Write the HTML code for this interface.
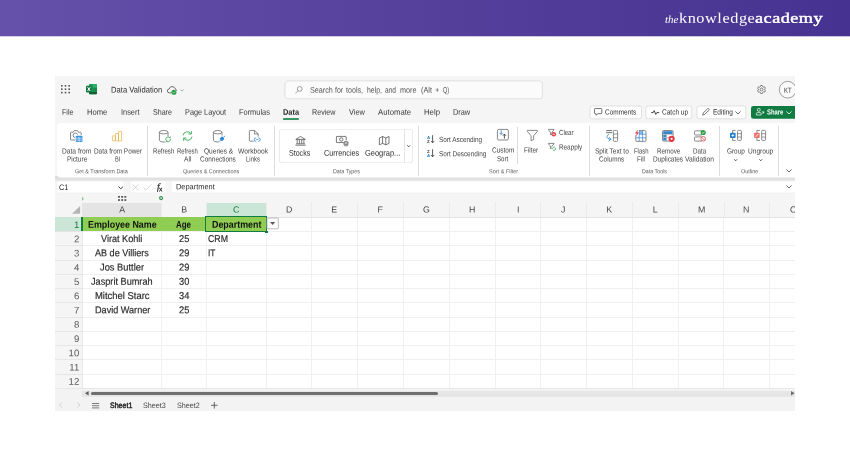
<!DOCTYPE html>
<html lang="en"><head><meta charset="utf-8"><title>Data Validation</title>
<style>
html,body{margin:0;padding:0;}
body{width:850px;height:450px;position:relative;overflow:hidden;background:#fff;font-family:"Liberation Sans", sans-serif;}
.t{position:absolute;white-space:nowrap;display:inline-block;transform-origin:0 50%;}
#hd{position:absolute;left:0;top:0;width:850px;height:40px;overflow:hidden;filter:blur(0.25px);}
#xl{position:absolute;left:55px;top:76px;width:740px;height:335px;overflow:hidden;background:#f5f5f5;filter:blur(0.3px);}
</style></head><body>
<div id="hd">
<div style="position:absolute;left:0.00px;top:0.00px;width:850.00px;height:36.30px;background:linear-gradient(90deg,#6551aa 0%,#55419c 50%,#463290 100%);"></div>
<div style="position:absolute;left:0.00px;top:36.00px;width:850.00px;height:1.00px;background:linear-gradient(90deg,#6551aa 0%,#55419c 50%,#463290 100%);opacity:0.3;"></div>
<span class="t" style='left:665.30px;top:11px;font-size:10.8px;line-height:14px;color:#fff;font-family:"Liberation Serif", serif;font-style:italic;transform:translateY(1.0px) scaleX(1.0149) rotate(0.03deg);'>the</span>
<span class="t" style='left:678.90px;top:8px;font-size:14.6px;line-height:18px;color:#fff;font-family:"Liberation Serif", serif;transform:translateY(0.75px) scaleX(1.1139) rotate(0.03deg);letter-spacing:0.5px;'>knowledge</span>
<span class="t" style='left:754.90px;top:8px;font-size:14.6px;line-height:18px;color:#fff;font-family:"Liberation Serif", serif;transform:translateY(0.75px) scaleX(1.2459) rotate(0.03deg);-webkit-text-stroke:0.45px #fff;letter-spacing:0.4px;'>academy</span>
</div>
<div id="xl">
<svg style="position:absolute;left:5.60px;top:9.20px;overflow:visible;" width="9.00" height="8.40" viewBox="0 0 9.00 8.40" fill="none"><rect x="0" y="0" width="1.6" height="1.6" fill="#555"/><rect x="0" y="3.4" width="1.6" height="1.6" fill="#555"/><rect x="0" y="6.8" width="1.6" height="1.6" fill="#555"/><rect x="3.7" y="0" width="1.6" height="1.6" fill="#555"/><rect x="3.7" y="3.4" width="1.6" height="1.6" fill="#555"/><rect x="3.7" y="6.8" width="1.6" height="1.6" fill="#555"/><rect x="7.4" y="0" width="1.6" height="1.6" fill="#555"/><rect x="7.4" y="3.4" width="1.6" height="1.6" fill="#555"/><rect x="7.4" y="6.8" width="1.6" height="1.6" fill="#555"/></svg>
<svg style="position:absolute;left:30.90px;top:8.30px;overflow:visible;" width="11.50" height="10.20" viewBox="0 0 11.50 10.20" fill="none"><rect x="3" y="0" width="8" height="10.2" rx="0.9" fill="#1f9a57"/><rect x="7" y="0.2" width="4" height="3.6" rx="0.6" fill="#2db470"/><rect x="7" y="3.8" width="4" height="4" fill="#188a4b"/><path d="M3 8 H11 V9.3 Q11 10.2 10.1 10.2 H3.9 Q3 10.2 3 9.3 Z" fill="#155c33"/><rect x="0" y="1.7" width="5.8" height="6.8" rx="0.7" fill="#127a3f"/><path d="M1.6 3.2 L4.2 7 M4.2 3.2 L1.6 7" stroke="#fff" stroke-width="1"/></svg>
<svg style="position:absolute;left:111.80px;top:9.60px;overflow:visible;" width="10.00" height="9.00" viewBox="0 0 10.00 9.00" fill="none"><path d="M4 6.9 H2.5 A2 2 0 0 1 2.3 2.9 A2.9 2.9 0 0 1 7.9 2.5 A2.1 2.1 0 0 1 9.4 4.4" stroke="#555" stroke-width="0.85" fill="none" stroke-linecap="round"/><circle cx="6.9" cy="6.2" r="2.55" fill="#2aa148"/><path d="M5.8 6.3 L6.6 7.1 L8 5.4" stroke="#e8f6ea" stroke-width="0.6" fill="none"/></svg>
<svg style="position:absolute;left:124.50px;top:13.00px;overflow:visible;" width="4.10" height="2.80" viewBox="0 0 4.10 2.80" fill="none"><path d="M0.3 0.4 L2.05 2.2 L3.8 0.4" stroke="#8a8a8a" stroke-width="0.7"/></svg>
<svg style="position:absolute;left:227.80px;top:3.00px;overflow:visible;filter:drop-shadow(0 0.5px 0.6px rgba(0,0,0,0.10));" width="261.40" height="21.70" viewBox="0 0 261.40 21.70" fill="none"><rect x="2" y="2" width="257.40" height="17.70" rx="3" fill="#fbfbfb" stroke="#dedede" stroke-width="0.7"/></svg>
<svg style="position:absolute;left:240.00px;top:9.80px;overflow:visible;" width="7.60" height="7.80" viewBox="0 0 7.60 7.80" fill="none"><circle cx="4.7" cy="2.9" r="2.4" stroke="#7a7a7a" stroke-width="0.7"/><path d="M3 4.7 L0.4 7.4" stroke="#7a7a7a" stroke-width="0.7"/></svg>
<svg style="position:absolute;left:702.00px;top:9.00px;overflow:visible;" width="9.00" height="9.00" viewBox="0 0 9.00 9.00" fill="none"><path d="M3.7 0.5 H5.3 L5.6 1.6 L6.5 2.1 L7.6 1.8 L8.4 3.2 L7.6 4 V5 L8.4 5.8 L7.6 7.2 L6.5 6.9 L5.6 7.4 L5.3 8.5 H3.7 L3.4 7.4 L2.5 6.9 L1.4 7.2 L0.6 5.8 L1.4 5 V4 L0.6 3.2 L1.4 1.8 L2.5 2.1 L3.4 1.6 Z" stroke="#555" stroke-width="0.7" stroke-linejoin="round"/><circle cx="4.5" cy="4.5" r="1.4" stroke="#555" stroke-width="0.7"/></svg>
<svg style="position:absolute;left:723.80px;top:5.30px;overflow:visible;" width="17.40" height="17.40" viewBox="0 0 17.40 17.40" fill="none"><circle cx="8.7" cy="8.7" r="8.35" fill="#fafafa" stroke="#777" stroke-width="0.7"/></svg>
<svg style="position:absolute;left:226.00px;top:40.10px;overflow:visible;" width="20.00" height="5.90" viewBox="0 0 20.00 5.90" fill="none"><rect x="2" y="2" width="16.00" height="1.90" rx="0.6" fill="#3a9562"/></svg>
<svg style="position:absolute;left:532.70px;top:27.60px;overflow:visible;" width="55.50" height="16.80" viewBox="0 0 55.50 16.80" fill="none"><rect x="2" y="2" width="51.50" height="12.80" rx="2.4" fill="#fff" stroke="#d4d4d4" stroke-width="0.7"/></svg>
<svg style="position:absolute;left:589.20px;top:27.60px;overflow:visible;" width="49.80" height="16.80" viewBox="0 0 49.80 16.80" fill="none"><rect x="2" y="2" width="45.80" height="12.80" rx="2.4" fill="#fff" stroke="#d4d4d4" stroke-width="0.7"/></svg>
<svg style="position:absolute;left:640.30px;top:27.60px;overflow:visible;" width="52.90" height="16.80" viewBox="0 0 52.90 16.80" fill="none"><rect x="2" y="2" width="48.90" height="12.80" rx="2.4" fill="#fff" stroke="#d4d4d4" stroke-width="0.7"/></svg>
<svg style="position:absolute;left:693.60px;top:27.60px;overflow:visible;" width="53.40" height="16.80" viewBox="0 0 53.40 16.80" fill="none"><rect x="2" y="2" width="49.40" height="12.80" rx="2.4" fill="#107c41"/></svg>
<svg style="position:absolute;left:539.30px;top:32.30px;overflow:visible;" width="8.30" height="7.50" viewBox="0 0 8.30 7.50" fill="none"><path d="M1.3 0.5 H7 Q7.8 0.5 7.8 1.3 V4.9 Q7.8 5.7 7 5.7 H3.8 L2 7.2 V5.7 H1.3 Q0.5 5.7 0.5 4.9 V1.3 Q0.5 0.5 1.3 0.5 Z" stroke="#444" stroke-width="0.75"/></svg>
<svg style="position:absolute;left:596.00px;top:33.50px;overflow:visible;" width="8.40" height="5.00" viewBox="0 0 8.40 5.00" fill="none"><path d="M0.2 2.6 H2.2 L3.2 0.6 L4.8 4.4 L5.8 2.6 H8.2" stroke="#333" stroke-width="0.9"/></svg>
<svg style="position:absolute;left:647.00px;top:32.00px;overflow:visible;" width="7.80" height="7.80" viewBox="0 0 7.80 7.80" fill="none"><path d="M0.7 7.1 L1.3 4.9 L5.6 0.6 Q6.2 0.2 6.8 0.8 Q7.5 1.5 7 2.1 L2.8 6.4 Z" stroke="#444" stroke-width="0.7"/></svg>
<svg style="position:absolute;left:680.00px;top:34.60px;overflow:visible;" width="6.00" height="3.40" viewBox="0 0 6.00 3.40" fill="none"><path d="M0.4 0.5 L3 3 L5.6 0.5" stroke="#444" stroke-width="0.8"/></svg>
<svg style="position:absolute;left:700.90px;top:32.20px;overflow:visible;" width="8.40" height="7.60" viewBox="0 0 8.40 7.60" fill="none"><circle cx="2.8" cy="1.9" r="1.5" stroke="#fff" stroke-width="0.7"/><path d="M0.4 7 V5.6 Q0.4 4.6 1.4 4.6 H4.2 Q5.2 4.6 5.2 5.6 V7 Z" stroke="#fff" stroke-width="0.7"/><path d="M6 3.2 L7.8 5 M7.8 3.2 V5 H6" stroke="#fff" stroke-width="0.7"/></svg>
<svg style="position:absolute;left:730.50px;top:34.60px;overflow:visible;" width="6.00" height="3.40" viewBox="0 0 6.00 3.40" fill="none"><path d="M0.4 0.5 L3 3 L5.6 0.5" stroke="#fff" stroke-width="0.8"/></svg>
<div style="position:absolute;left:0.00px;top:100.00px;width:745.00px;height:5.00px;background:linear-gradient(#e0e0e0 0%,#dfdfdf 55%,#e9e9e9 100%);"></div>
<svg style="position:absolute;left:-0.20px;top:45.20px;overflow:visible;" width="747.20" height="58.40" viewBox="0 0 747.20 58.40" fill="none"><rect x="2" y="2" width="743.20" height="54.40" rx="4" fill="#fff"/></svg>
<div style="position:absolute;left:91.90px;top:50.00px;width:0.80px;height:49.60px;background:#dcdcdc;"></div>
<div style="position:absolute;left:219.00px;top:50.00px;width:0.80px;height:49.60px;background:#dcdcdc;"></div>
<div style="position:absolute;left:363.20px;top:50.00px;width:0.80px;height:49.60px;background:#dcdcdc;"></div>
<div style="position:absolute;left:534.00px;top:50.00px;width:0.80px;height:49.60px;background:#dcdcdc;"></div>
<div style="position:absolute;left:664.20px;top:50.00px;width:0.80px;height:49.60px;background:#dcdcdc;"></div>
<div style="position:absolute;left:723.20px;top:50.00px;width:0.80px;height:49.60px;background:#dcdcdc;"></div>
<div style="position:absolute;left:462.00px;top:51.00px;width:0.80px;height:37.00px;background:#dcdcdc;"></div>
<div style="position:absolute;left:223.80px;top:52.50px;width:134.50px;height:34.20px;background:#fff;border-radius:3px;box-shadow:inset 0 0 0 0.6px #e0e0e0;"></div>
<div style="position:absolute;left:349.20px;top:52.80px;width:0.60px;height:33.60px;background:#e4e4e4;"></div>
<svg style="position:absolute;left:352.40px;top:69.00px;overflow:visible;" width="3.40" height="2.20" viewBox="0 0 3.40 2.20" fill="none"><path d="M0.3 0.3 L1.7 1.8 L3.1 0.3" stroke="#333" stroke-width="0.85"/></svg>
<svg style="position:absolute;left:678.80px;top:83.00px;overflow:visible;" width="3.40" height="2.20" viewBox="0 0 3.40 2.20" fill="none"><path d="M0.3 0.3 L1.7 1.8 L3.1 0.3" stroke="#333" stroke-width="0.85"/></svg>
<svg style="position:absolute;left:703.90px;top:83.00px;overflow:visible;" width="3.40" height="2.20" viewBox="0 0 3.40 2.20" fill="none"><path d="M0.3 0.3 L1.7 1.8 L3.1 0.3" stroke="#333" stroke-width="0.85"/></svg>
<svg style="position:absolute;left:730.60px;top:93.00px;overflow:visible;" width="6.00" height="3.40" viewBox="0 0 6.00 3.40" fill="none"><path d="M0.4 0.5 L3 3 L5.6 0.5" stroke="#444" stroke-width="0.8"/></svg>
<svg style="position:absolute;left:15.40px;top:54.00px;overflow:visible;" width="12.60" height="12.00" viewBox="0 0 12.60 12.00" fill="none"><path d="M0.5 3 Q0.5 2.2 1.3 2.2 H3.2 L4.2 0.6 H7.4 L8.4 2.2 H10.4 Q11.2 2.2 11.2 3 V5.2 M0.5 3 V9.2 Q0.5 10 1.3 10 H5.2" stroke="#6b6b6b" stroke-width="0.8"/><path d="M7.6 4.6 A2.3 2.3 0 1 0 5.3 7.6" stroke="#6b6b6b" stroke-width="0.8"/><rect x="5.1" y="5.2" width="8" height="7.3" rx="1.2" fill="#fff"/><rect x="5.7" y="5.8" width="6.8" height="6.1" rx="1" fill="#3793e0"/><path d="M5.7 8.2 H12.5 M5.7 10.1 H12.5 M9.1 7 V11.9" stroke="#fff" stroke-width="0.6"/></svg>
<svg style="position:absolute;left:57.20px;top:54.70px;overflow:visible;" width="10.00" height="10.30" viewBox="0 0 10.00 10.30" fill="none"><rect x="0.4" y="4.9" width="3" height="5" rx="0.4" stroke="#e6b352" stroke-width="0.75"/><rect x="3.4" y="2.5" width="3.1" height="7.4" rx="0.4" stroke="#e6b352" stroke-width="0.75"/><rect x="6.5" y="0.4" width="3.1" height="9.5" rx="0.4" stroke="#e6b352" stroke-width="0.75"/></svg>
<svg style="position:absolute;left:103.60px;top:53.80px;overflow:visible;" width="12.40" height="12.40" viewBox="0 0 12.40 12.40" fill="none"><path d="M0.4 2.2 V10.2 A4.3 1.8 0 0 0 9.0 10.2 V2.2" stroke="#6b6b6b" stroke-width="0.8"/><ellipse cx="4.7" cy="2.2" rx="4.3" ry="1.7" stroke="#6b6b6b" stroke-width="0.8"/><rect x="6" y="6" width="6.4" height="6.4" rx="1" fill="#fff"/><path d="M7.2 10.4 A2.3 2.3 0 0 1 10.6 7.4 M11.2 8.6 A2.3 2.3 0 0 1 7.8 11.4" stroke="#3aa85a" stroke-width="0.9"/><path d="M11.5 6.3 V8 H9.8 Z M6.9 12.2 V10.4 H8.6 Z" fill="#3aa85a"/></svg>
<svg style="position:absolute;left:127.20px;top:54.90px;overflow:visible;" width="11.00" height="10.00" viewBox="0 0 11.00 10.00" fill="none"><path d="M1 4.4 A4.4 4.2 0 0 1 9 2.6 M10 5.6 A4.4 4.2 0 0 1 2 7.4" stroke="#3aa85a" stroke-width="0.9"/><path d="M9.4 0.2 V3 H6.6 M1.6 9.8 V7 H4.4" stroke="#3aa85a" stroke-width="0.9"/></svg>
<svg style="position:absolute;left:157.60px;top:53.80px;overflow:visible;" width="12.40" height="12.20" viewBox="0 0 12.40 12.20" fill="none"><path d="M0.4 2.2 V10.2 A4.3 1.8 0 0 0 9.0 10.2 V2.2" stroke="#6b6b6b" stroke-width="0.8"/><ellipse cx="4.7" cy="2.2" rx="4.3" ry="1.7" stroke="#6b6b6b" stroke-width="0.8"/><rect x="5.6" y="5.6" width="6.6" height="6.4" rx="1" fill="#fff"/><path d="M6.2 11.6 L8 9.8 M10.2 7.6 L12 5.8" stroke="#2a86d6" stroke-width="0.9"/><rect x="7.2" y="7" width="3.6" height="3.6" rx="0.8" fill="#2a86d6" transform="rotate(45 9 8.8)"/></svg>
<svg style="position:absolute;left:193.60px;top:53.90px;overflow:visible;" width="11.40" height="12.00" viewBox="0 0 11.40 12.00" fill="none"><path d="M4.6 11.2 H1.2 Q0.4 11.2 0.4 10.4 V1.2 Q0.4 0.4 1.2 0.4 H5.6 L9.2 4 V6.6 M5.6 0.4 V4 H9.2" stroke="#6b6b6b" stroke-width="0.8"/><path d="M7.2 7.9 H6.9 A1.7 1.7 0 0 0 6.9 11.3 H7.2 M9.3 7.9 H9.6 A1.7 1.7 0 0 1 9.6 11.3 H9.3 M7.2 9.6 H9.3" stroke="#2a86d6" stroke-width="0.8"/></svg>
<svg style="position:absolute;left:239.70px;top:60.30px;overflow:visible;" width="11.10" height="9.60" viewBox="0 0 11.10 9.60" fill="none"><path d="M0.8 3.4 L5.55 0.5 L10.3 3.4 Z" stroke="#4a4a4a" stroke-width="0.75" stroke-linejoin="round"/><path d="M2.2 3.6 V7.6 M4.4 3.6 V7.6 M6.7 3.6 V7.6 M8.9 3.6 V7.6 M1.2 7.8 H9.9 M0.4 9.2 H10.7" stroke="#4a4a4a" stroke-width="0.75"/></svg>
<svg style="position:absolute;left:280.90px;top:60.30px;overflow:visible;" width="12.40" height="10.20" viewBox="0 0 12.40 10.20" fill="none"><path d="M7.6 6.6 H1 Q0.4 6.6 0.4 6 V1 Q0.4 0.4 1 0.4 H9.6 Q10.2 0.4 10.2 1 V4.2" stroke="#4a4a4a" stroke-width="0.75"/><circle cx="5.3" cy="3.5" r="1.7" stroke="#4a4a4a" stroke-width="0.75"/><ellipse cx="10" cy="6.2" rx="1.9" ry="0.9" stroke="#4a4a4a" stroke-width="0.7"/><path d="M8.1 6.2 V9 A1.9 0.9 0 0 0 11.9 9 V6.2 M8.1 7.6 A1.9 0.9 0 0 0 11.9 7.6" stroke="#4a4a4a" stroke-width="0.7"/></svg>
<svg style="position:absolute;left:323.80px;top:60.30px;overflow:visible;" width="10.40" height="9.20" viewBox="0 0 10.40 9.20" fill="none"><path d="M0.4 2 L3.6 0.5 L6.8 2 L10 0.5 V7.4 L6.8 8.8 L3.6 7.4 L0.4 8.8 Z M3.6 0.5 V7.4 M6.8 2 V8.8" stroke="#4a4a4a" stroke-width="0.75" stroke-linejoin="round"/></svg>
<svg style="position:absolute;left:372.20px;top:59.30px;overflow:visible;" width="7.20" height="8.20" viewBox="0 0 7.20 8.20" fill="none"><text x="0" y="3.7" font-family="Liberation Sans, sans-serif" font-size="4.4" font-weight="700" fill="#2a86d6">A</text><text x="0" y="8.1" font-family="Liberation Sans, sans-serif" font-size="4.4" font-weight="700" fill="#333">Z</text><path d="M5.6 0.2 V7.6 M4 6 L5.6 7.8 L7.2 6" stroke="#333" stroke-width="0.8"/></svg>
<svg style="position:absolute;left:372.20px;top:73.40px;overflow:visible;" width="7.20" height="8.20" viewBox="0 0 7.20 8.20" fill="none"><text x="0" y="3.7" font-family="Liberation Sans, sans-serif" font-size="4.4" font-weight="700" fill="#333">Z</text><text x="0" y="8.1" font-family="Liberation Sans, sans-serif" font-size="4.4" font-weight="700" fill="#2a86d6">A</text><path d="M5.6 0.2 V7.6 M4 6 L5.6 7.8 L7.2 6" stroke="#333" stroke-width="0.8"/></svg>
<svg style="position:absolute;left:441.80px;top:53.30px;overflow:visible;" width="11.80" height="11.40" viewBox="0 0 11.80 11.40" fill="none"><rect x="0.4" y="0.4" width="11" height="10.6" rx="1.4" stroke="#6b6b6b" stroke-width="0.8"/><path d="M4.2 1.2 V5.4 M2.6 3.8 L4.2 5.6 L5.8 3.8" stroke="#2a86d6" stroke-width="0.8"/><path d="M7.4 9.6 V5.2 M5.8 6.8 L7.4 5 L9 6.8" stroke="#333" stroke-width="0.8"/></svg>
<svg style="position:absolute;left:471.90px;top:53.60px;overflow:visible;" width="10.70" height="11.10" viewBox="0 0 10.70 11.10" fill="none"><path d="M0.4 0.4 H10.299999999999999 V1.55 L6.63 5.77 V9.55 L4.07 10.70 V5.77 L0.4 1.55 Z" stroke="#6b6b6b" stroke-width="0.8" stroke-linejoin="round"/></svg>
<svg style="position:absolute;left:493.40px;top:52.60px;overflow:visible;" width="8.20" height="7.80" viewBox="0 0 8.20 7.80" fill="none"><path d="M0.4 0.4 H6.0 V0.87 L3.97 3.22 V5.33 L2.43 5.80 V3.22 L0.4 0.87 Z" stroke="#555" stroke-width="0.7" stroke-linejoin="round"/><circle cx="5.8" cy="5.3" r="2.3" fill="#e5484d"/><path d="M4.6 5.3 H7" stroke="#fff" stroke-width="0.7"/></svg>
<svg style="position:absolute;left:493.40px;top:66.70px;overflow:visible;" width="8.20" height="7.70" viewBox="0 0 8.20 7.70" fill="none"><path d="M0.4 0.4 H6.0 V0.84 L3.97 3.12 V5.16 L2.43 5.60 V3.12 L0.4 0.84 Z" stroke="#555" stroke-width="0.7" stroke-linejoin="round"/><rect x="3.7" y="3.2" width="4.5" height="4.5" rx="0.8" fill="#fff"/><path d="M4.4 6.2 A1.7 1.7 0 0 1 7 4.4 M7.6 5 A1.7 1.7 0 0 1 5 7" stroke="#3aa85a" stroke-width="0.8"/></svg>
<svg style="position:absolute;left:550.80px;top:54.00px;overflow:visible;" width="12.20" height="11.80" viewBox="0 0 12.20 11.80" fill="none"><path d="M0.2 0.6 H6.2 M0.2 2.7 H6.2" stroke="#444" stroke-width="0.8"/><path d="M2.6 4.6 C0 5.4 0 9.4 4.6 9.2 M3.2 7.4 L5 9.2 L3 10.9" stroke="#2a86d6" stroke-width="0.85" stroke-linecap="round"/><rect x="7.4" y="0.4" width="4.2" height="11" rx="1" stroke="#6b6b6b" stroke-width="0.8"/><path d="M7.4 4.07 H11.600000000000001 M7.4 7.73 H11.600000000000001" stroke="#6b6b6b" stroke-width="0.7"/></svg>
<svg style="position:absolute;left:580.40px;top:54.00px;overflow:visible;" width="11.40" height="11.80" viewBox="0 0 11.40 11.80" fill="none"><rect x="0.8" y="0.6" width="10.2" height="10.8" rx="1.2" stroke="#6b6b6b" stroke-width="0.8"/><path d="M4.2 0.6 V11.4 M7.6 0.6 V11.4 M0.8 4.2 H11 M0.8 7.8 H11" stroke="#2a86d6" stroke-width="0.7"/><rect x="4.2" y="0.9" width="3.4" height="3.2" fill="#2a86d6" opacity="0.55"/><rect x="0" y="0" width="3.8" height="5.4" fill="#fff"/><path d="M2.9 -0.4 L0 3.6 H1.9 L0.7 6.6 L4.2 2.4 H2.3 Z" fill="#e5383f"/></svg>
<svg style="position:absolute;left:606.80px;top:54.20px;overflow:visible;" width="12.80" height="12.00" viewBox="0 0 12.80 12.00" fill="none"><rect x="0.5" y="0.5" width="10.6" height="10.6" rx="1.2" stroke="#6b6b6b" stroke-width="0.8"/><rect x="1.2" y="1.2" width="9.2" height="2.8" fill="#2a86d6"/><rect x="1.2" y="4.8" width="3" height="2.4" fill="#2a86d6"/><rect x="1.2" y="8" width="3" height="2.4" fill="#2a86d6"/><path d="M4.6 0.6 V11 M0.6 4.4 H11 M0.6 7.6 H11" stroke="#8a8a8a" stroke-width="0.5"/><circle cx="9.6" cy="8.8" r="3.1" fill="#e5383f"/><circle cx="9.6" cy="8.8" r="1.1" fill="#fff"/></svg>
<svg style="position:absolute;left:638.60px;top:54.00px;overflow:visible;" width="12.00" height="11.80" viewBox="0 0 12.00 11.80" fill="none"><rect x="0.5" y="0.8" width="8" height="4.2" rx="1" stroke="#6b6b6b" stroke-width="0.8"/><rect x="0.5" y="6.9" width="8" height="4.2" rx="1" stroke="#6b6b6b" stroke-width="0.8"/><circle cx="9.2" cy="2.5" r="2.6" fill="#2ea043"/><path d="M8 2.6 L8.9 3.5 L10.5 1.7" stroke="#fff" stroke-width="0.7"/><circle cx="9.2" cy="8.8" r="2.3" fill="#fff" stroke="#e5484d" stroke-width="0.8"/><path d="M7.6 7.2 L10.8 10.4" stroke="#e5484d" stroke-width="0.8"/></svg>
<svg style="position:absolute;left:674.60px;top:54.10px;overflow:visible;" width="11.80" height="10.90" viewBox="0 0 11.80 10.90" fill="none"><path d="M5.6 0.4 H2.6 V10.4 H5.6" stroke="#6b6b6b" stroke-width="0.8"/><rect x="7.5" y="0.4" width="3.9" height="10" rx="1" stroke="#6b6b6b" stroke-width="0.8"/><path d="M7.5 3.73 H11.4 M7.5 7.07 H11.4" stroke="#6b6b6b" stroke-width="0.7"/><rect x="0" y="2.8" width="5.6" height="5.2" rx="0.8" fill="#1e7fd0"/><path d="M2.8 4 V6.8 M1.4 5.4 H4.2" stroke="#fff" stroke-width="0.8"/></svg>
<svg style="position:absolute;left:699.30px;top:54.10px;overflow:visible;" width="12.00" height="10.90" viewBox="0 0 12.00 10.90" fill="none"><path d="M5.9 0.4 H2.9 V10.4 H5.9" stroke="#6b6b6b" stroke-width="0.8"/><rect x="7.7" y="0.4" width="3.9" height="10" rx="1" stroke="#6b6b6b" stroke-width="0.8"/><path d="M7.7 3.73 H11.6 M7.7 7.07 H11.6" stroke="#6b6b6b" stroke-width="0.7"/><rect x="0" y="2.8" width="5.7" height="5.2" rx="0.8" fill="#ee7670"/><path d="M1.6 6.8 L4.2 4" stroke="#fff" stroke-width="0.8"/></svg>
<svg style="position:absolute;left:-0.20px;top:103.00px;overflow:visible;" width="71.50" height="15.90" viewBox="0 0 71.50 15.90" fill="none"><rect x="2" y="2" width="67.50" height="11.90" rx="2.5" fill="#fff" stroke="#ebebeb" stroke-width="0.5"/></svg>
<svg style="position:absolute;left:72.60px;top:103.00px;overflow:visible;" width="40.30" height="15.90" viewBox="0 0 40.30 15.90" fill="none"><rect x="2" y="2" width="36.30" height="11.90" rx="2.5" fill="#fff" stroke="#ebebeb" stroke-width="0.5"/></svg>
<svg style="position:absolute;left:113.80px;top:103.00px;overflow:visible;" width="633.20" height="15.90" viewBox="0 0 633.20 15.90" fill="none"><rect x="2" y="2" width="629.20" height="11.90" rx="2.5" fill="#fff" stroke="#ebebeb" stroke-width="0.5"/></svg>
<svg style="position:absolute;left:62.60px;top:109.80px;overflow:visible;" width="5.50" height="3.20" viewBox="0 0 5.50 3.20" fill="none"><path d="M0.4 0.5 L2.75 2.8 L5.1 0.5" stroke="#333" stroke-width="0.95"/></svg>
<svg style="position:absolute;left:77.20px;top:107.80px;overflow:visible;" width="7.00" height="6.80" viewBox="0 0 7.00 6.80" fill="none"><path d="M0.4 0.4 L6.6 6.4 M6.6 0.4 L0.4 6.4" stroke="#c4c4c4" stroke-width="0.7"/></svg>
<svg style="position:absolute;left:88.20px;top:108.00px;overflow:visible;" width="8.80" height="6.40" viewBox="0 0 8.80 6.40" fill="none"><path d="M0.4 3.6 L3 6 L8.4 0.4" stroke="#c4c4c4" stroke-width="0.7"/></svg>
<svg style="position:absolute;left:730.60px;top:109.40px;overflow:visible;" width="6.00" height="3.40" viewBox="0 0 6.00 3.40" fill="none"><path d="M0.4 0.5 L3 3 L5.6 0.5" stroke="#444" stroke-width="0.8"/></svg>
<svg style="position:absolute;left:27.40px;top:120.60px;overflow:visible;" width="2.00" height="3.60" viewBox="0 0 2.00 3.60" fill="none"><path d="M0.3 0.3 Q1.7 1.8 0.3 3.3" stroke="#2e9e54" stroke-width="0.8"/></svg>
<svg style="position:absolute;left:62.90px;top:120.20px;overflow:visible;" width="8.30" height="4.90" viewBox="0 0 8.30 4.90" fill="none"><rect x="0" y="0" width="1.9" height="1.7" fill="#505050"/><rect x="0" y="3.2" width="1.9" height="1.7" fill="#505050"/><rect x="3.2" y="0" width="1.9" height="1.7" fill="#505050"/><rect x="3.2" y="3.2" width="1.9" height="1.7" fill="#505050"/><rect x="6.4" y="0" width="1.9" height="1.7" fill="#505050"/><rect x="6.4" y="3.2" width="1.9" height="1.7" fill="#505050"/></svg>
<svg style="position:absolute;left:103.80px;top:120.10px;overflow:visible;" width="4.20" height="4.20" viewBox="0 0 4.20 4.20" fill="none"><circle cx="2.1" cy="2.1" r="1.5" stroke="#2a8d4c" stroke-width="1.1"/></svg>
<div style="position:absolute;left:27.60px;top:140.90px;width:717.40px;height:171.20px;background:#fff;"></div>
<div style="position:absolute;left:0.00px;top:127.40px;width:745.00px;height:13.50px;background:#f5f5f5;"></div>
<div style="position:absolute;left:27.00px;top:127.40px;width:79.40px;height:13.50px;background:#e4e4e4;"></div>
<div style="position:absolute;left:150.60px;top:127.10px;width:60.40px;height:13.80px;background:#cbe6d6;"></div>
<div style="position:absolute;left:106.10px;top:126.40px;width:0.60px;height:14.50px;background:#ebebeb;"></div>
<div style="position:absolute;left:150.70px;top:126.40px;width:0.60px;height:14.50px;background:#ebebeb;"></div>
<div style="position:absolute;left:210.70px;top:126.40px;width:0.60px;height:14.50px;background:#ebebeb;"></div>
<div style="position:absolute;left:256.48px;top:126.40px;width:0.60px;height:14.50px;background:#ebebeb;"></div>
<div style="position:absolute;left:302.26px;top:126.40px;width:0.60px;height:14.50px;background:#ebebeb;"></div>
<div style="position:absolute;left:348.04px;top:126.40px;width:0.60px;height:14.50px;background:#ebebeb;"></div>
<div style="position:absolute;left:393.82px;top:126.40px;width:0.60px;height:14.50px;background:#ebebeb;"></div>
<div style="position:absolute;left:439.60px;top:126.40px;width:0.60px;height:14.50px;background:#ebebeb;"></div>
<div style="position:absolute;left:485.38px;top:126.40px;width:0.60px;height:14.50px;background:#ebebeb;"></div>
<div style="position:absolute;left:531.16px;top:126.40px;width:0.60px;height:14.50px;background:#ebebeb;"></div>
<div style="position:absolute;left:576.94px;top:126.40px;width:0.60px;height:14.50px;background:#ebebeb;"></div>
<div style="position:absolute;left:622.72px;top:126.40px;width:0.60px;height:14.50px;background:#ebebeb;"></div>
<div style="position:absolute;left:668.50px;top:126.40px;width:0.60px;height:14.50px;background:#ebebeb;"></div>
<div style="position:absolute;left:714.28px;top:126.40px;width:0.60px;height:14.50px;background:#ebebeb;"></div>
<div style="position:absolute;left:760.06px;top:126.40px;width:0.60px;height:14.50px;background:#ebebeb;"></div>
<div style="position:absolute;left:106.05px;top:140.90px;width:0.70px;height:171.20px;background:#f0f0f0;"></div>
<div style="position:absolute;left:150.65px;top:140.90px;width:0.70px;height:171.20px;background:#f0f0f0;"></div>
<div style="position:absolute;left:210.65px;top:140.90px;width:0.70px;height:171.20px;background:#f0f0f0;"></div>
<div style="position:absolute;left:256.43px;top:140.90px;width:0.70px;height:171.20px;background:#f0f0f0;"></div>
<div style="position:absolute;left:302.21px;top:140.90px;width:0.70px;height:171.20px;background:#f0f0f0;"></div>
<div style="position:absolute;left:347.99px;top:140.90px;width:0.70px;height:171.20px;background:#f0f0f0;"></div>
<div style="position:absolute;left:393.77px;top:140.90px;width:0.70px;height:171.20px;background:#f0f0f0;"></div>
<div style="position:absolute;left:439.55px;top:140.90px;width:0.70px;height:171.20px;background:#f0f0f0;"></div>
<div style="position:absolute;left:485.33px;top:140.90px;width:0.70px;height:171.20px;background:#f0f0f0;"></div>
<div style="position:absolute;left:531.11px;top:140.90px;width:0.70px;height:171.20px;background:#f0f0f0;"></div>
<div style="position:absolute;left:576.89px;top:140.90px;width:0.70px;height:171.20px;background:#f0f0f0;"></div>
<div style="position:absolute;left:622.67px;top:140.90px;width:0.70px;height:171.20px;background:#f0f0f0;"></div>
<div style="position:absolute;left:668.45px;top:140.90px;width:0.70px;height:171.20px;background:#f0f0f0;"></div>
<div style="position:absolute;left:714.23px;top:140.90px;width:0.70px;height:171.20px;background:#f0f0f0;"></div>
<div style="position:absolute;left:760.01px;top:140.90px;width:0.70px;height:171.20px;background:#f0f0f0;"></div>
<div style="position:absolute;left:0.00px;top:155.00px;width:745.00px;height:0.70px;background:#f0f0f0;"></div>
<div style="position:absolute;left:0.00px;top:169.25px;width:745.00px;height:0.70px;background:#f0f0f0;"></div>
<div style="position:absolute;left:0.00px;top:183.50px;width:745.00px;height:0.70px;background:#f0f0f0;"></div>
<div style="position:absolute;left:0.00px;top:197.75px;width:745.00px;height:0.70px;background:#f0f0f0;"></div>
<div style="position:absolute;left:0.00px;top:212.00px;width:745.00px;height:0.70px;background:#f0f0f0;"></div>
<div style="position:absolute;left:0.00px;top:226.25px;width:745.00px;height:0.70px;background:#f0f0f0;"></div>
<div style="position:absolute;left:0.00px;top:240.50px;width:745.00px;height:0.70px;background:#f0f0f0;"></div>
<div style="position:absolute;left:0.00px;top:254.75px;width:745.00px;height:0.70px;background:#f0f0f0;"></div>
<div style="position:absolute;left:0.00px;top:269.00px;width:745.00px;height:0.70px;background:#f0f0f0;"></div>
<div style="position:absolute;left:0.00px;top:283.25px;width:745.00px;height:0.70px;background:#f0f0f0;"></div>
<div style="position:absolute;left:0.00px;top:297.50px;width:745.00px;height:0.70px;background:#f0f0f0;"></div>
<div style="position:absolute;left:0.00px;top:311.75px;width:745.00px;height:0.70px;background:#f0f0f0;"></div>
<div style="position:absolute;left:0.00px;top:140.90px;width:27.60px;height:171.20px;background:#f5f5f5;"></div>
<div style="position:absolute;left:0.00px;top:155.05px;width:27.60px;height:0.60px;background:#e6e6e6;"></div>
<div style="position:absolute;left:0.00px;top:169.30px;width:27.60px;height:0.60px;background:#e6e6e6;"></div>
<div style="position:absolute;left:0.00px;top:183.55px;width:27.60px;height:0.60px;background:#e6e6e6;"></div>
<div style="position:absolute;left:0.00px;top:197.80px;width:27.60px;height:0.60px;background:#e6e6e6;"></div>
<div style="position:absolute;left:0.00px;top:212.05px;width:27.60px;height:0.60px;background:#e6e6e6;"></div>
<div style="position:absolute;left:0.00px;top:226.30px;width:27.60px;height:0.60px;background:#e6e6e6;"></div>
<div style="position:absolute;left:0.00px;top:240.55px;width:27.60px;height:0.60px;background:#e6e6e6;"></div>
<div style="position:absolute;left:0.00px;top:254.80px;width:27.60px;height:0.60px;background:#e6e6e6;"></div>
<div style="position:absolute;left:0.00px;top:269.05px;width:27.60px;height:0.60px;background:#e6e6e6;"></div>
<div style="position:absolute;left:0.00px;top:283.30px;width:27.60px;height:0.60px;background:#e6e6e6;"></div>
<div style="position:absolute;left:0.00px;top:297.55px;width:27.60px;height:0.60px;background:#e6e6e6;"></div>
<div style="position:absolute;left:0.00px;top:311.80px;width:27.60px;height:0.60px;background:#e6e6e6;"></div>
<div style="position:absolute;left:27.20px;top:140.90px;width:0.70px;height:171.20px;background:#e8e8e8;"></div>
<div style="position:absolute;left:0.00px;top:140.50px;width:745.00px;height:0.70px;background:#e4e4e4;"></div>
<svg style="position:absolute;left:16.80px;top:130.40px;overflow:visible;" width="8.10" height="7.80" viewBox="0 0 8.10 7.80" fill="none"><path d="M8.1 0 V7.8 H0 Z" fill="#b5b5b5"/></svg>
<div style="position:absolute;left:0.00px;top:141.10px;width:26.20px;height:14.25px;background:#cbe6d6;"></div>
<div style="position:absolute;left:26.20px;top:141.10px;width:1.80px;height:14.25px;background:#107c41;"></div>
<div style="position:absolute;left:28.00px;top:141.10px;width:123.00px;height:14.25px;background:#8fce52;"></div>
<div style="position:absolute;left:150.20px;top:140.20px;width:61.60px;height:16.05px;background:#8fce52;border:1.5px solid #107c41;box-sizing:border-box;"></div>
<div style="position:absolute;left:210.20px;top:154.75px;width:2.40px;height:2.40px;background:#107c41;"></div>
<div style="position:absolute;left:151.00px;top:139.90px;width:60.00px;height:1.40px;background:#107c41;"></div>
<svg style="position:absolute;left:210.00px;top:140.00px;overflow:visible;" width="15.30" height="14.80" viewBox="0 0 15.30 14.80" fill="none"><rect x="2" y="2" width="11.30" height="10.80" rx="0.6" fill="#fff" stroke="#ababab" stroke-width="0.8"/></svg>
<svg style="position:absolute;left:215.00px;top:146.40px;overflow:visible;" width="5.20" height="2.90" viewBox="0 0 5.20 2.90" fill="none"><path d="M0 0 H5.2 L2.6 2.9 Z" fill="#5a5a5a"/></svg>
<div style="position:absolute;left:0.00px;top:312.10px;width:745.00px;height:22.90px;background:#f3f3f3;"></div>
<div style="position:absolute;left:27.00px;top:314.60px;width:718.00px;height:6.00px;background:#e6e6e6;"></div>
<div style="position:absolute;left:0.00px;top:311.80px;width:745.00px;height:0.70px;background:#e8e8e8;"></div>
<svg style="position:absolute;left:29.60px;top:315.20px;overflow:visible;" width="3.60" height="4.60" viewBox="0 0 3.60 4.60" fill="none"><path d="M3.6 0 V4.6 L0 2.3 Z" fill="#5c5c5c"/></svg>
<svg style="position:absolute;left:736.20px;top:315.20px;overflow:visible;" width="3.60" height="4.60" viewBox="0 0 3.60 4.60" fill="none"><path d="M0 0 V4.6 L3.6 2.3 Z" fill="#6c6c6c"/></svg>
<div style="position:absolute;left:35.70px;top:315.70px;width:346.90px;height:3.20px;background:#6e6e6e;border-radius:1.6px;"></div>
<svg style="position:absolute;left:4.20px;top:326.40px;overflow:visible;" width="3.40" height="6.00" viewBox="0 0 3.40 6.00" fill="none"><path d="M3 0.4 L0.5 3 L3 5.6" stroke="#c8c8c8" stroke-width="0.8"/></svg>
<svg style="position:absolute;left:21.60px;top:326.40px;overflow:visible;" width="3.40" height="6.00" viewBox="0 0 3.40 6.00" fill="none"><path d="M0.4 0.4 L2.9 3 L0.4 5.6" stroke="#c8c8c8" stroke-width="0.8"/></svg>
<svg style="position:absolute;left:37.40px;top:326.60px;overflow:visible;" width="7.20" height="5.40" viewBox="0 0 7.20 5.40" fill="none"><path d="M0 0.5 H7.2 M0 2.7 H7.2 M0 4.9 H7.2" stroke="#444" stroke-width="0.7"/></svg>
<svg style="position:absolute;left:155.80px;top:326.00px;overflow:visible;" width="6.60" height="6.60" viewBox="0 0 6.60 6.60" fill="none"><path d="M3.3 0 V6.6 M0 3.3 H6.6" stroke="#444" stroke-width="0.8"/></svg>
<span class="t" style='left:55.60px;top:8px;font-size:8.2px;line-height:11px;color:#2a2a2a;transform:translateY(0.5px) scaleX(0.9322) rotate(0.03deg);'>Data Validation</span>
<span class="t" style='left:254.70px;top:8px;font-size:8.2px;line-height:11px;color:#525252;transform:translateY(0.75px) scaleX(0.8824) rotate(0.03deg);'>Search</span>
<span class="t" style='left:279.80px;top:8px;font-size:8.2px;line-height:11px;color:#525252;transform:translateY(0.75px) scaleX(0.8471) rotate(0.03deg);'>for</span>
<span class="t" style='left:291.20px;top:8px;font-size:8.2px;line-height:11px;color:#525252;transform:translateY(0.75px) scaleX(0.8683) rotate(0.03deg);'>tools,</span>
<span class="t" style='left:311.50px;top:8px;font-size:8.2px;line-height:11px;color:#525252;transform:translateY(0.75px) scaleX(0.8443) rotate(0.03deg);'>help,</span>
<span class="t" style='left:330.20px;top:8px;font-size:8.2px;line-height:11px;color:#525252;transform:translateY(0.75px) scaleX(0.8046) rotate(0.03deg);'>and</span>
<span class="t" style='left:345.00px;top:8px;font-size:8.2px;line-height:11px;color:#525252;transform:translateY(0.75px) scaleX(0.8844) rotate(0.03deg);'>more</span>
<span class="t" style='left:365.50px;top:8px;font-size:8.2px;line-height:11px;color:#525252;transform:translateY(0.75px) scaleX(0.8957) rotate(0.03deg);'>(Alt</span>
<span class="t" style='left:380.00px;top:8px;font-size:8.2px;line-height:11px;color:#525252;transform:translateY(0.75px) scaleX(0.9173) rotate(0.03deg);'>+</span>
<span class="t" style='left:387.90px;top:8px;font-size:8.2px;line-height:11px;color:#525252;transform:translateY(0.75px) scaleX(0.6806) rotate(0.03deg);'>Q)</span>
<span class="t" style='left:728.80px;top:8px;font-size:7.3px;line-height:11px;color:#333;transform:translateY(0.75px) scaleX(0.8147) rotate(0.03deg);'>KT</span>
<span class="t" style='left:7.40px;top:30px;font-size:8.1px;line-height:11px;color:#363636;transform:translateY(0.75px) scaleX(0.8814) rotate(0.03deg);'>File</span>
<span class="t" style='left:32.30px;top:30px;font-size:8.1px;line-height:11px;color:#363636;transform:translateY(0.75px) scaleX(0.9401) rotate(0.03deg);'>Home</span>
<span class="t" style='left:65.80px;top:30px;font-size:8.1px;line-height:11px;color:#363636;transform:translateY(0.75px) scaleX(0.9136) rotate(0.03deg);'>Insert</span>
<span class="t" style='left:97.60px;top:30px;font-size:8.1px;line-height:11px;color:#363636;transform:translateY(0.75px) scaleX(0.8746) rotate(0.03deg);'>Share</span>
<span class="t" style='left:129.70px;top:30px;font-size:8.1px;line-height:11px;color:#363636;transform:translateY(0.75px) scaleX(0.9042) rotate(0.03deg);'>Page Layout</span>
<span class="t" style='left:184.40px;top:30px;font-size:8.1px;line-height:11px;color:#363636;transform:translateY(0.75px) scaleX(0.9160) rotate(0.03deg);'>Formulas</span>
<span class="t" style='left:256.80px;top:30px;font-size:8.1px;line-height:11px;color:#363636;transform:translateY(0.75px) scaleX(0.8852) rotate(0.03deg);'>Review</span>
<span class="t" style='left:293.50px;top:30px;font-size:8.1px;line-height:11px;color:#363636;transform:translateY(0.75px) scaleX(0.9135) rotate(0.03deg);'>View</span>
<span class="t" style='left:322.60px;top:30px;font-size:8.1px;line-height:11px;color:#363636;transform:translateY(0.75px) scaleX(0.9580) rotate(0.03deg);'>Automate</span>
<span class="t" style='left:369.00px;top:30px;font-size:8.1px;line-height:11px;color:#363636;transform:translateY(0.75px) scaleX(0.9606) rotate(0.03deg);'>Help</span>
<span class="t" style='left:398.00px;top:30px;font-size:8.1px;line-height:11px;color:#363636;transform:translateY(0.75px) scaleX(0.9105) rotate(0.03deg);'>Draw</span>
<span class="t" style='left:228.00px;top:30px;font-size:8.1px;line-height:11px;color:#222;font-weight:700;transform:translateY(0.75px) scaleX(0.9118) rotate(0.03deg);'>Data</span>
<span class="t" style='left:550.20px;top:30px;font-size:7.5px;line-height:11px;color:#2e2e2e;transform:translateY(0.5px) scaleX(0.8631) rotate(0.03deg);'>Comments</span>
<span class="t" style='left:606.50px;top:30px;font-size:7.5px;line-height:11px;color:#2e2e2e;transform:translateY(0.5px) scaleX(0.8691) rotate(0.03deg);'>Catch up</span>
<span class="t" style='left:657.60px;top:30px;font-size:7.5px;line-height:11px;color:#2e2e2e;transform:translateY(0.5px) scaleX(0.8719) rotate(0.03deg);'>Editing</span>
<span class="t" style='left:711.50px;top:30px;font-size:7.5px;line-height:11px;color:#fff;font-weight:700;transform:translateY(0.5px) scaleX(0.7862) rotate(0.03deg);'>Share</span>
<span class="t" style='left:7.00px;top:69px;font-size:7.4px;line-height:11px;color:#444444;transform:translateY(0.5px) scaleX(0.8998) rotate(0.03deg);'>Data from</span>
<span class="t" style='left:11.50px;top:77px;font-size:7.4px;line-height:11px;color:#444444;transform:translateY(0.5px) scaleX(0.8820) rotate(0.03deg);'>Picture</span>
<span class="t" style='left:38.80px;top:69px;font-size:7.4px;line-height:11px;color:#444444;transform:translateY(0.5px) scaleX(0.8656) rotate(0.03deg);'>Data from Power</span>
<span class="t" style='left:60.00px;top:77px;font-size:7.4px;line-height:11px;color:#444444;transform:translateY(0.5px) scaleX(0.7588) rotate(0.03deg);'>BI</span>
<span class="t" style='left:20.30px;top:91px;font-size:5.9px;line-height:8px;color:#5a5a5a;transform:translateY(0.25px) scaleX(0.9233) rotate(0.03deg);'>Get &amp; Transform Data</span>
<span class="t" style='left:98.30px;top:69px;font-size:7.4px;line-height:11px;color:#444444;transform:translateY(0.5px) scaleX(0.8227) rotate(0.03deg);'>Refresh</span>
<span class="t" style='left:121.80px;top:69px;font-size:7.4px;line-height:11px;color:#444444;transform:translateY(0.5px) scaleX(0.8034) rotate(0.03deg);'>Refresh</span>
<span class="t" style='left:128.50px;top:77px;font-size:7.4px;line-height:11px;color:#444444;transform:translateY(0.5px) scaleX(0.9004) rotate(0.03deg);'>All</span>
<span class="t" style='left:148.80px;top:69px;font-size:7.4px;line-height:11px;color:#444444;transform:translateY(0.5px) scaleX(0.8882) rotate(0.03deg);'>Queries &amp;</span>
<span class="t" style='left:145.30px;top:77px;font-size:7.4px;line-height:11px;color:#444444;transform:translateY(0.5px) scaleX(0.8712) rotate(0.03deg);'>Connections</span>
<span class="t" style='left:183.20px;top:69px;font-size:7.4px;line-height:11px;color:#444444;transform:translateY(0.5px) scaleX(0.9052) rotate(0.03deg);'>Workbook</span>
<span class="t" style='left:191.20px;top:77px;font-size:7.4px;line-height:11px;color:#444444;transform:translateY(0.5px) scaleX(0.8167) rotate(0.03deg);'>Links</span>
<span class="t" style='left:127.60px;top:91px;font-size:5.9px;line-height:8px;color:#5a5a5a;transform:translateY(0.25px) scaleX(0.9277) rotate(0.03deg);'>Queries &amp; Connections</span>
<span class="t" style='left:234.40px;top:70px;font-size:8.3px;line-height:12px;color:#2c2c2c;transform:translateY(0.75px) scaleX(0.8512) rotate(0.03deg);'>Stocks</span>
<span class="t" style='left:269.40px;top:70px;font-size:8.3px;line-height:12px;color:#2c2c2c;transform:translateY(0.75px) scaleX(0.8773) rotate(0.03deg);'>Currencies</span>
<span class="t" style='left:310.30px;top:70px;font-size:8.3px;line-height:12px;color:#2c2c2c;transform:translateY(0.75px) scaleX(0.9001) rotate(0.03deg);'>Geograp...</span>
<span class="t" style='left:278.00px;top:91px;font-size:5.9px;line-height:8px;color:#5a5a5a;transform:translateY(0.25px) scaleX(0.9090) rotate(0.03deg);'>Data Types</span>
<span class="t" style='left:383.90px;top:58px;font-size:7.4px;line-height:11px;color:#444444;transform:translateY(0.0px) scaleX(0.8689) rotate(0.03deg);'>Sort Ascending</span>
<span class="t" style='left:383.90px;top:72px;font-size:7.4px;line-height:11px;color:#444444;transform:translateY(0.25px) scaleX(0.8657) rotate(0.03deg);'>Sort Descending</span>
<span class="t" style='left:436.50px;top:68px;font-size:7.4px;line-height:11px;color:#444444;transform:translateY(0.5px) scaleX(0.8795) rotate(0.03deg);'>Custom</span>
<span class="t" style='left:442.10px;top:77px;font-size:7.4px;line-height:11px;color:#444444;transform:translateY(0.25px) scaleX(0.8184) rotate(0.03deg);'>Sort</span>
<span class="t" style='left:468.80px;top:68px;font-size:7.4px;line-height:11px;color:#444444;transform:translateY(0.5px) scaleX(0.8578) rotate(0.03deg);'>Filter</span>
<span class="t" style='left:504.40px;top:51px;font-size:7.4px;line-height:11px;color:#444444;transform:translateY(0.0px) scaleX(0.8205) rotate(0.03deg);'>Clear</span>
<span class="t" style='left:504.40px;top:65px;font-size:7.4px;line-height:11px;color:#444444;transform:translateY(0.5px) scaleX(0.8590) rotate(0.03deg);'>Reapply</span>
<span class="t" style='left:434.30px;top:91px;font-size:5.9px;line-height:8px;color:#5a5a5a;transform:translateY(0.25px) scaleX(0.9386) rotate(0.03deg);'>Sort &amp; Filter</span>
<span class="t" style='left:540.00px;top:69px;font-size:7.4px;line-height:11px;color:#444444;transform:translateY(0.5px) scaleX(0.8876) rotate(0.03deg);'>Split Text to</span>
<span class="t" style='left:544.10px;top:77px;font-size:7.4px;line-height:11px;color:#444444;transform:translateY(0.5px) scaleX(0.8638) rotate(0.03deg);'>Columns</span>
<span class="t" style='left:578.50px;top:69px;font-size:7.4px;line-height:11px;color:#444444;transform:translateY(0.5px) scaleX(0.8021) rotate(0.03deg);'>Flash</span>
<span class="t" style='left:582.00px;top:77px;font-size:7.4px;line-height:11px;color:#444444;transform:translateY(0.5px) scaleX(0.8463) rotate(0.03deg);'>Fill</span>
<span class="t" style='left:601.50px;top:69px;font-size:7.4px;line-height:11px;color:#444444;transform:translateY(0.5px) scaleX(0.8463) rotate(0.03deg);'>Remove</span>
<span class="t" style='left:597.90px;top:77px;font-size:7.4px;line-height:11px;color:#444444;transform:translateY(0.5px) scaleX(0.8692) rotate(0.03deg);'>Duplicates</span>
<span class="t" style='left:638.00px;top:69px;font-size:7.4px;line-height:11px;color:#444444;transform:translateY(0.5px) scaleX(0.8448) rotate(0.03deg);'>Data</span>
<span class="t" style='left:629.70px;top:77px;font-size:7.4px;line-height:11px;color:#444444;transform:translateY(0.5px) scaleX(0.9116) rotate(0.03deg);'>Validation</span>
<span class="t" style='left:587.00px;top:91px;font-size:5.9px;line-height:8px;color:#5a5a5a;transform:translateY(0.25px) scaleX(0.9014) rotate(0.03deg);'>Data Tools</span>
<span class="t" style='left:671.50px;top:69px;font-size:7.4px;line-height:11px;color:#444444;transform:translateY(0.5px) scaleX(0.8663) rotate(0.03deg);'>Group</span>
<span class="t" style='left:692.70px;top:69px;font-size:7.4px;line-height:11px;color:#444444;transform:translateY(0.5px) scaleX(0.8886) rotate(0.03deg);'>Ungroup</span>
<span class="t" style='left:685.60px;top:91px;font-size:5.9px;line-height:8px;color:#5a5a5a;transform:translateY(0.25px) scaleX(0.9319) rotate(0.03deg);'>Outline</span>
<span class="t" style='left:4.20px;top:106px;font-size:8px;line-height:11px;color:#222;transform:translateY(0.0px) scaleX(0.8989) rotate(0.03deg);'>C1</span>
<span class="t" style='left:101.60px;top:104px;font-size:9.2px;line-height:12px;color:#222;font-family:"Liberation Serif", serif;font-style:italic;transform:translateY(0.75px) scaleX(1.0000) rotate(0.03deg);-webkit-text-stroke:0.2px #222;'>f</span>
<span class="t" style='left:104.40px;top:108px;font-size:6.8px;line-height:9px;color:#222;transform:translateY(0.5px) scaleX(1.0000) rotate(0.03deg);-webkit-text-stroke:0.2px #222;'>x</span>
<span class="t" style='left:120.70px;top:105px;font-size:7.8px;line-height:11px;color:#2a2a2a;transform:translateY(0.25px) scaleX(0.9521) rotate(0.03deg);'>Department</span>
<span class="t" style='left:63.50px;top:127px;font-size:8.8px;line-height:12px;color:#484848;transform:translateY(0.5px) scaleX(1.0000) rotate(0.03deg);width:6.4px;text-align:center;'>A</span>
<span class="t" style='left:125.50px;top:127px;font-size:8.8px;line-height:12px;color:#484848;transform:translateY(0.5px) scaleX(1.0000) rotate(0.03deg);width:6.4px;text-align:center;'>B</span>
<span class="t" style='left:177.80px;top:127px;font-size:8.8px;line-height:12px;color:#107c41;transform:translateY(0.5px) scaleX(1.0000) rotate(0.03deg);width:6.4px;text-align:center;'>C</span>
<span class="t" style='left:230.69px;top:127px;font-size:8.8px;line-height:12px;color:#484848;transform:translateY(0.5px) scaleX(1.0000) rotate(0.03deg);width:6.4px;text-align:center;'>D</span>
<span class="t" style='left:276.47px;top:127px;font-size:8.8px;line-height:12px;color:#484848;transform:translateY(0.5px) scaleX(1.0000) rotate(0.03deg);width:6.4px;text-align:center;'>E</span>
<span class="t" style='left:322.25px;top:127px;font-size:8.8px;line-height:12px;color:#484848;transform:translateY(0.5px) scaleX(1.0000) rotate(0.03deg);width:6.4px;text-align:center;'>F</span>
<span class="t" style='left:368.03px;top:127px;font-size:8.8px;line-height:12px;color:#484848;transform:translateY(0.5px) scaleX(1.0000) rotate(0.03deg);width:6.4px;text-align:center;'>G</span>
<span class="t" style='left:413.81px;top:127px;font-size:8.8px;line-height:12px;color:#484848;transform:translateY(0.5px) scaleX(1.0000) rotate(0.03deg);width:6.4px;text-align:center;'>H</span>
<span class="t" style='left:459.59px;top:127px;font-size:8.8px;line-height:12px;color:#484848;transform:translateY(0.5px) scaleX(1.0000) rotate(0.03deg);width:6.4px;text-align:center;'>I</span>
<span class="t" style='left:505.37px;top:127px;font-size:8.8px;line-height:12px;color:#484848;transform:translateY(0.5px) scaleX(1.0000) rotate(0.03deg);width:6.4px;text-align:center;'>J</span>
<span class="t" style='left:551.15px;top:127px;font-size:8.8px;line-height:12px;color:#484848;transform:translateY(0.5px) scaleX(1.0000) rotate(0.03deg);width:6.4px;text-align:center;'>K</span>
<span class="t" style='left:596.93px;top:127px;font-size:8.8px;line-height:12px;color:#484848;transform:translateY(0.5px) scaleX(1.0000) rotate(0.03deg);width:6.4px;text-align:center;'>L</span>
<span class="t" style='left:642.71px;top:127px;font-size:8.8px;line-height:12px;color:#484848;transform:translateY(0.5px) scaleX(1.0000) rotate(0.03deg);width:6.4px;text-align:center;'>M</span>
<span class="t" style='left:688.49px;top:127px;font-size:8.8px;line-height:12px;color:#484848;transform:translateY(0.5px) scaleX(1.0000) rotate(0.03deg);width:6.4px;text-align:center;'>N</span>
<span class="t" style='left:735.00px;top:127px;font-size:8.8px;line-height:12px;color:#484848;transform:translateY(0.5px) scaleX(1.0000) rotate(0.03deg);width:6.4px;text-align:center;'>O</span>
<span class="t" style='left:5.00px;top:142px;font-size:9.6px;line-height:13px;color:#107c41;transform:translateY(0.0px) scaleX(1.0000) rotate(0.03deg);width:19.3px;text-align:right;'>1</span>
<span class="t" style='left:5.00px;top:156px;font-size:9.6px;line-height:13px;color:#585858;transform:translateY(0.25px) scaleX(1.0000) rotate(0.03deg);width:19.3px;text-align:right;'>2</span>
<span class="t" style='left:5.00px;top:170px;font-size:9.6px;line-height:13px;color:#585858;transform:translateY(0.5px) scaleX(1.0000) rotate(0.03deg);width:19.3px;text-align:right;'>3</span>
<span class="t" style='left:5.00px;top:184px;font-size:9.6px;line-height:13px;color:#585858;transform:translateY(0.75px) scaleX(1.0000) rotate(0.03deg);width:19.3px;text-align:right;'>4</span>
<span class="t" style='left:5.00px;top:199px;font-size:9.6px;line-height:13px;color:#585858;transform:translateY(0.0px) scaleX(1.0000) rotate(0.03deg);width:19.3px;text-align:right;'>5</span>
<span class="t" style='left:5.00px;top:213px;font-size:9.6px;line-height:13px;color:#585858;transform:translateY(0.25px) scaleX(1.0000) rotate(0.03deg);width:19.3px;text-align:right;'>6</span>
<span class="t" style='left:5.00px;top:227px;font-size:9.6px;line-height:13px;color:#585858;transform:translateY(0.5px) scaleX(1.0000) rotate(0.03deg);width:19.3px;text-align:right;'>7</span>
<span class="t" style='left:5.00px;top:241px;font-size:9.6px;line-height:13px;color:#585858;transform:translateY(0.75px) scaleX(1.0000) rotate(0.03deg);width:19.3px;text-align:right;'>8</span>
<span class="t" style='left:5.00px;top:256px;font-size:9.6px;line-height:13px;color:#585858;transform:translateY(0.0px) scaleX(1.0000) rotate(0.03deg);width:19.3px;text-align:right;'>9</span>
<span class="t" style='left:5.00px;top:270px;font-size:9.6px;line-height:13px;color:#585858;transform:translateY(0.25px) scaleX(1.0000) rotate(0.03deg);width:19.3px;text-align:right;'>10</span>
<span class="t" style='left:5.00px;top:284px;font-size:9.6px;line-height:13px;color:#585858;transform:translateY(0.5px) scaleX(1.0000) rotate(0.03deg);width:19.3px;text-align:right;'>11</span>
<span class="t" style='left:5.00px;top:298px;font-size:9.6px;line-height:13px;color:#585858;transform:translateY(0.75px) scaleX(1.0000) rotate(0.03deg);width:19.3px;text-align:right;'>12</span>
<span class="t" style='left:32.90px;top:141px;font-size:9.9px;line-height:13px;color:#111;font-weight:700;transform:translateY(0.75px) scaleX(0.8991) rotate(0.03deg);'>Employee Name</span>
<span class="t" style='left:121.20px;top:141px;font-size:9.9px;line-height:13px;color:#111;font-weight:700;transform:translateY(0.75px) scaleX(0.8040) rotate(0.03deg);'>Age</span>
<span class="t" style='left:156.50px;top:141px;font-size:9.9px;line-height:13px;color:#111;font-weight:700;transform:translateY(0.75px) scaleX(0.9002) rotate(0.03deg);'>Department</span>
<span class="t" style='left:46.20px;top:156px;font-size:9.9px;line-height:13px;color:#2b2b2b;transform:translateY(0.0px) scaleX(0.9235) rotate(0.03deg);-webkit-text-stroke:0.18px #2b2b2b;'>Virat Kohli</span>
<span class="t" style='left:123.50px;top:156px;font-size:9.9px;line-height:13px;color:#2b2b2b;transform:translateY(0.0px) scaleX(0.9377) rotate(0.03deg);-webkit-text-stroke:0.18px #2b2b2b;'>25</span>
<span class="t" style='left:40.30px;top:170px;font-size:9.9px;line-height:13px;color:#2b2b2b;transform:translateY(0.25px) scaleX(0.9189) rotate(0.03deg);-webkit-text-stroke:0.18px #2b2b2b;'>AB de Villiers</span>
<span class="t" style='left:123.50px;top:170px;font-size:9.9px;line-height:13px;color:#2b2b2b;transform:translateY(0.25px) scaleX(0.9377) rotate(0.03deg);-webkit-text-stroke:0.18px #2b2b2b;'>29</span>
<span class="t" style='left:44.70px;top:184px;font-size:9.9px;line-height:13px;color:#2b2b2b;transform:translateY(0.5px) scaleX(0.9431) rotate(0.03deg);-webkit-text-stroke:0.18px #2b2b2b;'>Jos Buttler</span>
<span class="t" style='left:123.50px;top:184px;font-size:9.9px;line-height:13px;color:#2b2b2b;transform:translateY(0.5px) scaleX(0.9377) rotate(0.03deg);-webkit-text-stroke:0.18px #2b2b2b;'>29</span>
<span class="t" style='left:36.00px;top:198px;font-size:9.9px;line-height:13px;color:#2b2b2b;transform:translateY(0.75px) scaleX(0.9276) rotate(0.03deg);-webkit-text-stroke:0.18px #2b2b2b;'>Jasprit Bumrah</span>
<span class="t" style='left:123.50px;top:198px;font-size:9.9px;line-height:13px;color:#2b2b2b;transform:translateY(0.75px) scaleX(0.9377) rotate(0.03deg);-webkit-text-stroke:0.18px #2b2b2b;'>30</span>
<span class="t" style='left:39.50px;top:213px;font-size:9.9px;line-height:13px;color:#2b2b2b;transform:translateY(0.0px) scaleX(0.9566) rotate(0.03deg);-webkit-text-stroke:0.18px #2b2b2b;'>Mitchel Starc</span>
<span class="t" style='left:123.50px;top:213px;font-size:9.9px;line-height:13px;color:#2b2b2b;transform:translateY(0.0px) scaleX(0.9377) rotate(0.03deg);-webkit-text-stroke:0.18px #2b2b2b;'>34</span>
<span class="t" style='left:39.50px;top:227px;font-size:9.9px;line-height:13px;color:#2b2b2b;transform:translateY(0.25px) scaleX(0.9217) rotate(0.03deg);-webkit-text-stroke:0.18px #2b2b2b;'>David Warner</span>
<span class="t" style='left:123.50px;top:227px;font-size:9.9px;line-height:13px;color:#2b2b2b;transform:translateY(0.25px) scaleX(0.9377) rotate(0.03deg);-webkit-text-stroke:0.18px #2b2b2b;'>25</span>
<span class="t" style='left:152.90px;top:156px;font-size:9.9px;line-height:13px;color:#2b2b2b;transform:translateY(0.0px) scaleX(0.8889) rotate(0.03deg);-webkit-text-stroke:0.18px #2b2b2b;'>CRM</span>
<span class="t" style='left:152.90px;top:170px;font-size:9.9px;line-height:13px;color:#2b2b2b;transform:translateY(0.25px) scaleX(0.8427) rotate(0.03deg);-webkit-text-stroke:0.18px #2b2b2b;'>IT</span>
<span class="t" style='left:55.30px;top:324px;font-size:7.9px;line-height:11px;color:#222;transform:translateY(0.0px) scaleX(0.8914) rotate(0.03deg);-webkit-text-stroke:0.4px #222;'>Sheet1</span>
<span class="t" style='left:88.20px;top:323px;font-size:7.8px;line-height:11px;color:#484848;transform:translateY(1.0px) scaleX(0.9264) rotate(0.03deg);'>Sheet3</span>
<span class="t" style='left:121.90px;top:323px;font-size:7.8px;line-height:11px;color:#484848;transform:translateY(1.0px) scaleX(0.9224) rotate(0.03deg);'>Sheet2</span>
</div>
</body></html>
